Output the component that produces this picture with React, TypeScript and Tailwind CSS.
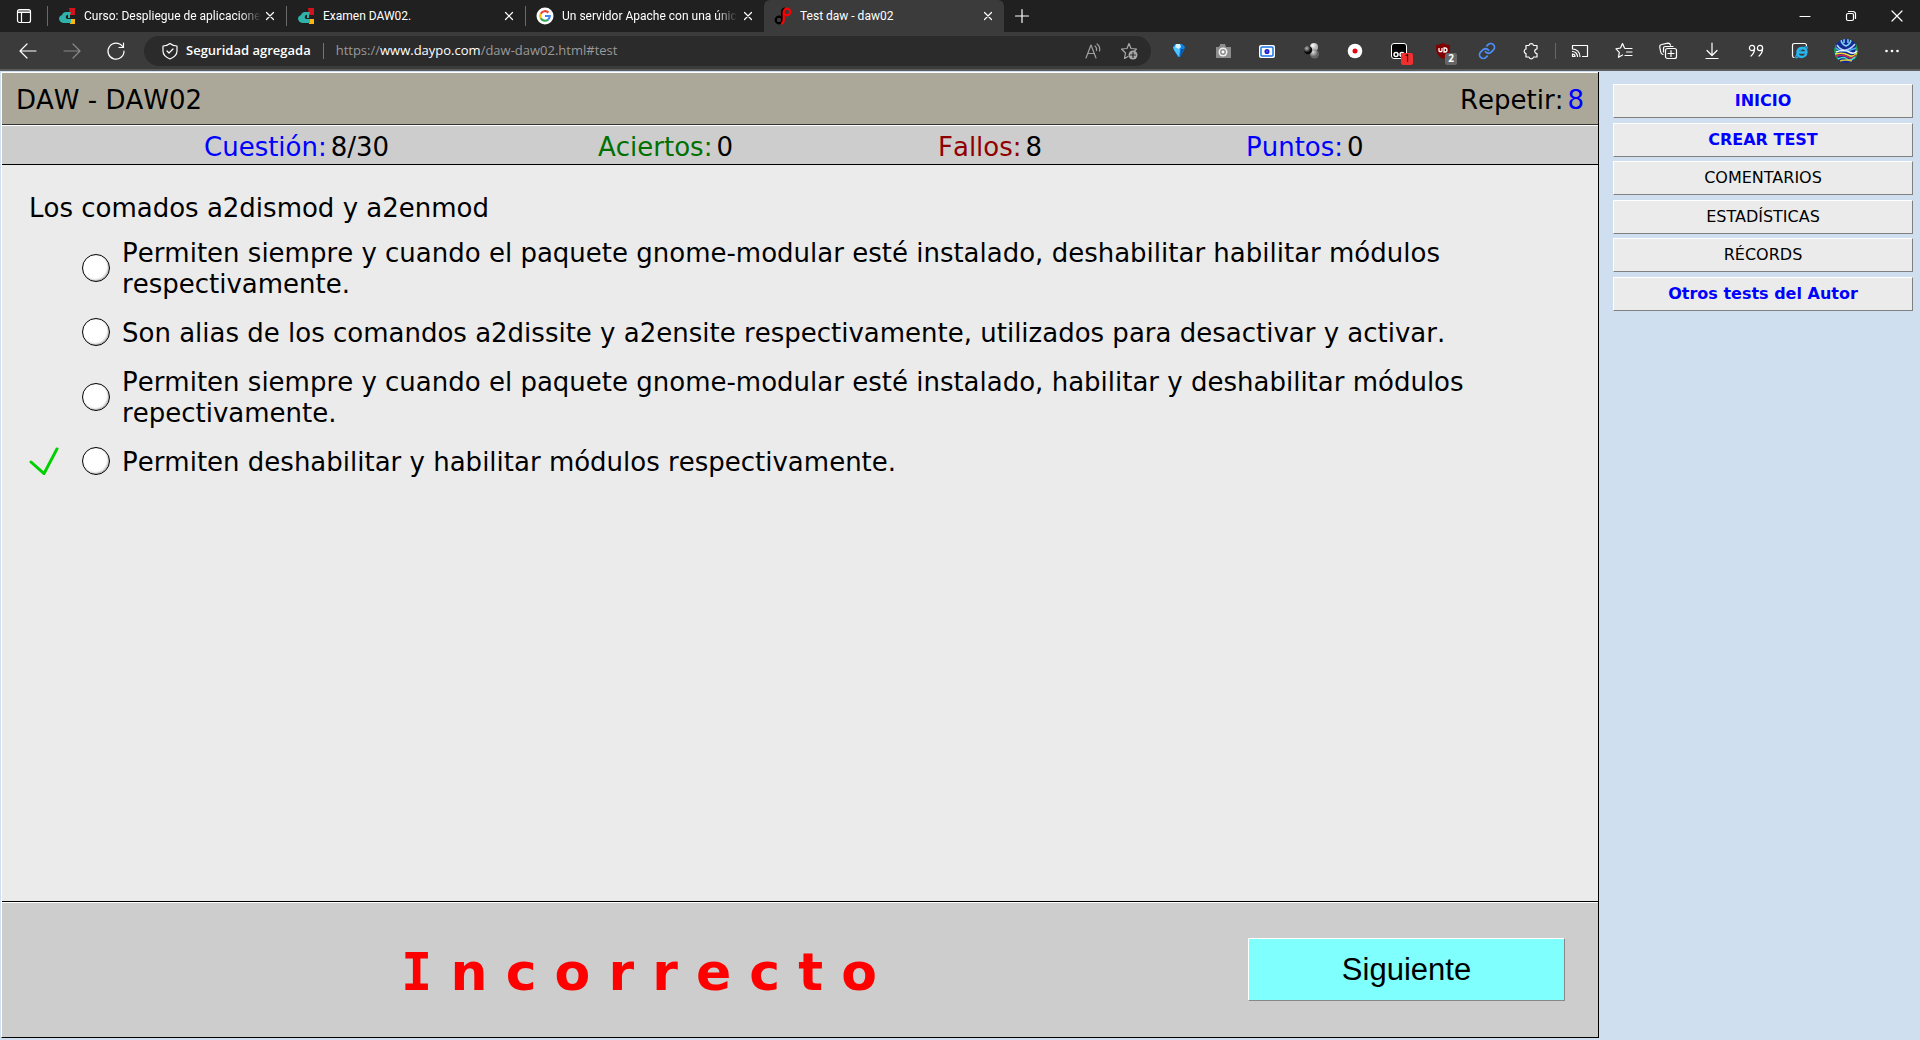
import React from "react";
import { Link as LinkIcon } from "lucide-react";

type Kids = { children: React.ReactNode };

function Ico({ children, w = 20, h = 20, c = "#ffffff" }: Kids & { w?: number; h?: number; c?: string }) {
  return (
    <svg width={w} height={h} viewBox={`0 0 ${w} ${h}`} fill="none" stroke={c} strokeWidth="1.2" strokeLinecap="round" strokeLinejoin="round" aria-hidden="true">
      {children}
    </svg>
  );
}

function CourseIcon() {
  return (
    <svg width="18" height="18" viewBox="0 0 18 18" className="shrink-0" aria-hidden="true">
      <path d="M11 1h6v7h-5z" fill="#d3131c" />
      <path d="M12 12h5v5h-5z" fill="#fbb615" />
      <path d="M13 5H8Q5 5 4 8 1 9 1 12q1 4 5 4h7v-4H9q-2-1-1-3 1-2 4-1z" fill="#2fb3ab" />
      <path d="M10 7h2v4h-2z" fill="#2fb3ab" />
      <path d="M12 11h5v1h-5z" fill="#1f1f1f" />
    </svg>
  );
}

function GoogleIcon() {
  return (
    <svg width="18" height="18" viewBox="0 0 18 18" className="shrink-0" fill="none" strokeWidth="2.2" aria-hidden="true">
      <circle cx="9" cy="9" r="8.5" fill="#fff" />
      <path d="M12.4 5.6A4.8 4.8 0 0 0 4.8 6.7" stroke="#ea4335" />
      <path d="M4.8 6.7a4.8 4.8 0 0 0 0 4.6" stroke="#fbbc05" />
      <path d="M4.8 11.3a4.8 4.8 0 0 0 7.3 1.3" stroke="#34a853" />
      <path d="M9 9h4.8q0 2.2-1.7 3.6" stroke="#4285f4" />
    </svg>
  );
}

function DaypoIcon() {
  return (
    <svg width="18" height="18" viewBox="0 0 18 18" className="shrink-0" fill="none" strokeWidth="2.2" aria-hidden="true">
      <circle cx="5" cy="13" r="3.3" stroke="#000" />
      <path d="M8.3 13V4.5Q8.3 2 11 1.2" stroke="#000" />
      <circle cx="13" cy="5" r="3.3" stroke="#f00" />
      <path d="M9.7 5v8q0 3-2.5 3.8" stroke="#f00" />
    </svg>
  );
}

function CloseButton({ label }: { label: string }) {
  return (
    <button type="button" aria-label={label} className="flex size-4 shrink-0 items-center justify-center">
      <Ico w={10} h={10}>
        <path d="M1.5 1.5l7 7M8.5 1.5l-7 7" />
      </Ico>
    </button>
  );
}

const tabs = [
  { title: "Curso: Despliegue de aplicacione", icon: <CourseIcon />, active: false, clipped: true },
  { title: "Examen DAW02.", icon: <CourseIcon />, active: false, clipped: false },
  { title: "Un servidor Apache con una únic", icon: <GoogleIcon />, active: false, clipped: true },
  { title: "Test daw - daw02", icon: <DaypoIcon />, active: true, clipped: false },
];

function TabStrip() {
  return (
    <div className="flex h-8 items-center bg-[#202020] text-white">
      <button type="button" aria-label="Menú de pestañas" className="flex w-[47px] shrink-0 items-center justify-center">
        <Ico w={16} h={16}>
          <rect x="1.5" y="1.5" width="13" height="13" rx="2" />
          <path d="M2 4.5h12M5.5 4.5v10M2 3h12" />
        </Ico>
      </button>
      {tabs.map((t) => (
        <div
          key={t.title}
          className={
            t.active
              ? "flex h-8 w-60 items-center rounded-t-md bg-[#3b3b3b] pr-2 pl-2.5"
              : "flex h-8 w-[239px] items-center pr-2"
          }
        >
          {!t.active && <span className="mr-2.5 h-5 w-px shrink-0 bg-[#6a6a6a]" />}
          {t.icon}
          <span
            className={
              t.clipped
                ? "ml-2 flex-none font-[Roboto,sans-serif] text-xs whitespace-nowrap [mask-image:linear-gradient(to_right,black_88%,transparent)]"
                : "ml-2 flex-none font-[Roboto,sans-serif] text-xs whitespace-nowrap"
            }
          >
            {t.title}
          </span>
          <span className="ml-auto flex">
            <CloseButton label={`Cerrar ${t.title}`} />
          </span>
        </div>
      ))}
      <button type="button" aria-label="Nueva pestaña" className="ml-2 flex size-5 items-center justify-center">
        <Ico w={16} h={16}>
          <path d="M8 1.5v13M1.5 8h13" />
        </Ico>
      </button>
      <div className="ml-auto flex">
        <button type="button" aria-label="Minimizar" className="flex w-[46px] justify-center">
          <Ico w={12} h={12}><path d="M1 6.5h10" /></Ico>
        </button>
        <button type="button" aria-label="Restaurar" className="flex w-[46px] justify-center">
          <Ico w={12} h={12}>
            <rect x="1.5" y="3.5" width="7" height="7" rx="1.5" />
            <path d="M3.5 1.5h4.5a2.5 2.5 0 0 1 2.5 2.5v4.5" />
          </Ico>
        </button>
        <button type="button" aria-label="Cerrar ventana" className="flex w-[46px] justify-center">
          <Ico w={12} h={12}><path d="M1 1l10 10M11 1L1 11" /></Ico>
        </button>
      </div>
    </div>
  );
}

const extensions = [
  {
    label: "Diamante",
    icon: (
      <svg width="20" height="20" viewBox="0 0 20 20">
        <path d="M6 3h7l3 3-1 3-4 7h-2L5 9 4 6z" fill="#0b86e8" />
        <path d="M4 6l5-1 2 4-1 7-5-7z" fill="#53c3ff" />
        <path d="M7 3h4l1 3-2 2-4-2z" fill="#d6f3ff" />
        <path d="M12 8l3 0-4 8z" fill="#0450a8" />
      </svg>
    ),
  },
  {
    label: "Captura",
    icon: (
      <svg width="20" height="20" viewBox="0 0 20 20">
        <path d="M3 6h3V5h1V3h5l1 3h5v11H3z" fill="#8d8d8d" />
        <circle cx="10" cy="11" r="4.5" fill="#f0f0f0" />
        <circle cx="10" cy="11" r="2.2" fill="#fff" stroke="#8d8d8d" strokeWidth="1.5" />
      </svg>
    ),
  },
  {
    label: "Visor",
    icon: (
      <svg width="20" height="20" viewBox="0 0 20 20">
        <rect x="2" y="4" width="16" height="13" rx="2" fill="#fff" />
        <rect x="4" y="6" width="12" height="9" rx="1" fill="#fff" stroke="#1a73e8" strokeWidth="1.5" />
        <circle cx="10" cy="10.5" r="1.8" fill="#5555dd" stroke="#2222cc" strokeWidth="1.5" />
      </svg>
    ),
  },
  {
    label: "Esferas",
    icon: (
      <svg width="20" height="20" viewBox="0 0 20 20">
        <defs>
          <radialGradient id="ball-light" cx="35%" cy="30%"><stop offset="0" stopColor="#fff" /><stop offset="1" stopColor="#b5b5b5" /></radialGradient>
          <radialGradient id="ball-mid" cx="35%" cy="30%"><stop offset="0" stopColor="#ddd" /><stop offset="1" stopColor="#666" /></radialGradient>
          <radialGradient id="ball-dark" cx="35%" cy="30%"><stop offset="0" stopColor="#bbb" /><stop offset="1" stopColor="#0a0a0a" /></radialGradient>
        </defs>
        <circle cx="13" cy="6" r="4" fill="url(#ball-light)" />
        <circle cx="13.5" cy="13" r="4.5" fill="url(#ball-mid)" />
        <circle cx="7" cy="9" r="4.2" fill="url(#ball-dark)" />
      </svg>
    ),
  },
  {
    label: "Grabar",
    icon: (
      <svg width="20" height="20" viewBox="0 0 20 20">
        <circle cx="10" cy="10" r="7.3" fill="#fff" />
        <circle cx="10" cy="10" r="2.5" fill="#e30613" />
      </svg>
    ),
  },
  {
    label: "Tampermonkey",
    badge: "1",
    icon: (
      <svg width="20" height="20" viewBox="0 0 20 20" fill="none" stroke="#fff">
        <rect x="2.5" y="2.5" width="15" height="15" rx="2.5" fill="#000" />
        <circle cx="7" cy="13.5" r="2" strokeWidth="1.5" />
        <circle cx="13" cy="13.5" r="2" strokeWidth="1.5" />
      </svg>
    ),
  },
  {
    label: "uBlock",
    badge: "2",
    icon: (
      <svg width="20" height="20" viewBox="0 0 20 20" fill="none">
        <path d="M10 2q3 2 7 2 1 10-7 14Q2 14 3 4q4 0 7-2z" fill="#800000" />
        <path d="M6 7v3a2 2 0 0 0 3 0V7M11 7v4h1a2 2 0 0 0 0-4z" stroke="#fff" strokeWidth="1.3" />
      </svg>
    ),
  },
  { label: "Enlace", icon: <LinkIcon size={18} color="#4c8df6" strokeWidth={2.4} /> },
  {
    label: "Extensiones",
    icon: (
      <Ico>
        <path d="M5 4.5h3a2.3 2.3 0 0 1 4.5 0H16V8a2 2 0 0 0 0 4.5V16h-3.5a2.3 2.3 0 0 1-4.5 0H5v-3.5a2.3 2.3 0 0 1 0-4.5z" />
      </Ico>
    ),
  },
];

const browserTools = [
  {
    label: "Transmitir",
    icon: (
      <Ico>
        <path d="M2.5 8V4.5h15v11h-5M2.5 8a7.5 7.5 0 0 1 7.5 7.5M2.5 10.5a5 5 0 0 1 5 5M2.5 13a2.5 2.5 0 0 1 2.5 2.5H2.5z" />
      </Ico>
    ),
  },
  {
    label: "Favoritos",
    icon: (
      <Ico>
        <path d="M10.5 7L8.5 2.5 6.5 7 2 7.8l3.3 3.5-.8 5L8.5 14M11 7.5h7M12.5 11h5.5M11 14.5h7" />
      </Ico>
    ),
  },
  {
    label: "Colecciones",
    icon: (
      <Ico>
        <rect x="7.5" y="7.5" width="11" height="10" rx="2" />
        <path d="M13 9.5v6M10 12.5h6M5 13.5q-2-.5-2.3-2.5L1.7 6q-.2-2 1.8-2.5L10 2.2q2 0 2.5 2M5.5 11V7.5q0-2 2-2H15" />
      </Ico>
    ),
  },
  { label: "Descargas", icon: <Ico><path d="M10 2v12M5 9.5l5 5 5-5M4 17.5h12" /></Ico> },
  {
    label: "Citas",
    icon: (
      <Ico>
        <circle cx="6" cy="7" r="2.6" />
        <circle cx="14" cy="7" r="2.6" />
        <path d="M8.6 7q0 5-3.6 8M16.6 7q0 5-3.6 8" />
      </Ico>
    ),
  },
  {
    label: "Modo Internet Explorer",
    icon: (
      <Ico>
        <path d="M4 16.5q-1.5 0-1.5-2v-10q0-2 2-2h10q2 0 2 2" />
        <path d="M16 13.5q-1.5 2.5-4 2.5-4.5 0-4.5-4.5T12 7t4.5 4.5H8" stroke="#28b6f0" strokeWidth="2.4" />
        <path d="M8 16q-3 2-2-1 3-6 9-9 3-1 2 1.5" stroke="#28b6f0" />
      </Ico>
    ),
  },
];

function Avatar() {
  return (
    <svg width="24" height="24" viewBox="0 0 24 24" fill="none" aria-hidden="true">
      <defs>
        <clipPath id="avatar-clip"><circle cx="12" cy="12" r="12" /></clipPath>
      </defs>
      <g clipPath="url(#avatar-clip)" strokeWidth="1.5">
        <path d="M0 0h24v24H0z" fill="#142a90" />
        <path d="M0 3l3 18M24 3l-3 18" stroke="#1f9a50" strokeWidth="3" />
        <path d="M7 0q0 5 5 7 5-2 5-7M10 0v4M14 0v4" stroke="#7fd4f5" />
        <path d="M3 6q4 6 9 5t9-6" stroke="#b8d8ff" />
        <path d="M2 9q6 6 20 0" stroke="#49a8ee" />
        <path d="M2 13q8-3 13 0t8-1" stroke="#e8f4ff" />
        <path d="M1 15q8-2 13 1t9-2" stroke="#e9d83a" />
        <path d="M2 17q8-2 12 1t8-2" stroke="#d0264e" />
        <path d="M4 20q6-3 9 0t8-2" stroke="#45e0d0" />
        <path d="M6 22q5-2 12 0" stroke="#e0c93a" />
      </g>
    </svg>
  );
}

function AddressRow() {
  return (
    <div className="flex h-[39px] items-center border-b-2 border-[#5b5b5b] bg-[#3b3b3b] text-white">
      <div className="flex items-center gap-6 pr-[18px] pl-[18px]">
        <button type="button" aria-label="Atrás"><Ico><path d="M18 10H2.5M9 3L2 10l7 7" /></Ico></button>
        <button type="button" aria-label="Adelante"><Ico c="#8a8a8a"><path d="M2 10h15.5M11 3l7 7-7 7" /></Ico></button>
        <button type="button" aria-label="Actualizar"><Ico><path d="M16.5 5.5A8 8 0 1 0 18 10M17.5 2v4.5H13" /></Ico></button>
      </div>
      <div className="flex h-[30px] flex-1 items-center rounded-full bg-[#2b2b2b] pr-3 pl-4">
        <Ico>
          <path d="M10 2.5q3 2.5 7 2.5v5q0 5-7 8-7-3-7-8V5q4 0 7-2.5zM7 10l2 2 4-4" />
        </Ico>
        <span className="ml-1.5 text-[13px] font-semibold whitespace-nowrap">Seguridad agregada</span>
        <span className="mx-3 h-4 w-px bg-[#757575]" />
        <div className="relative flex-1 text-[13px]">
          <span aria-hidden="true" className="text-[#9a9a9a]">
            https://<span className="text-white">www.daypo.com</span>/daw-daw02.html#test
          </span>
          <input aria-label="Dirección" className="absolute inset-0 w-full bg-transparent text-transparent outline-none" />
        </div>
        <button type="button" aria-label="Leer en voz alta">
          <Ico c="#a0a0a0"><path d="M3 17L8 4l5 13M5 12.5h6M12 5q2 1.5 1.5 4.5M14 3q3.5 2.5 2.5 7" /></Ico>
        </button>
        <button type="button" aria-label="Agregar a favoritos" className="ml-4">
          <Ico c="#a8a8a8">
            <path d="M10 2.5l2 5 5.5.5-2 2M10 2.5l-2 5-5.5.5 4 4-1 5.5L9 15.5" />
            <circle cx="14" cy="14" r="4.5" fill="#a8a8a8" stroke="none" />
            <path d="M14 11.5v5M11.500 14h5" stroke="#2b2b2b" />
          </Ico>
        </button>
      </div>
      <div className="flex items-center gap-6 pr-[14px] pl-[18px]">
        {extensions.map((e) => (
          <button key={e.label} type="button" aria-label={e.label} className="relative flex size-5 items-center justify-center">
            {e.icon}
            {e.badge && (
              <span
                className={
                  e.badge === "1"
                    ? "absolute top-3 left-3 flex h-3 w-3 items-center justify-center rounded-xs bg-[#f03030] text-[10px] text-black"
                    : "absolute top-3 left-3 flex h-3 w-3 items-center justify-center rounded-xs bg-[#666] text-[10px] font-bold"
                }
              >
                {e.badge}
              </span>
            )}
          </button>
        ))}
      </div>
      <span className="h-4 w-px bg-[#666]" />
      <div className="flex items-center gap-6 pr-6 pl-3.5">
        {browserTools.map((b) => (
          <button key={b.label} type="button" aria-label={b.label}>{b.icon}</button>
        ))}
      </div>
      <button type="button" aria-label="Perfil"><Avatar /></button>
      <button type="button" aria-label="Más opciones" className="mr-[18px] ml-6">
        <svg width="20" height="20" viewBox="0 0 20 20" fill="#fff">
          <circle cx="4.5" cy="10" r="1.3" /><circle cx="10" cy="10" r="1.3" /><circle cx="15.5" cy="10" r="1.3" />
        </svg>
      </button>
    </div>
  );
}

const scores = [
  { label: "Cuestión:", value: "8/30", color: "text-[#0000ff]", width: "w-[394px]" },
  { label: "Aciertos:", value: "0", color: "text-[#007000]", width: "w-[340px]" },
  { label: "Fallos:", value: "8", color: "text-[#900000]", width: "w-[308px]" },
  { label: "Puntos:", value: "0", color: "text-[#0000ff]", width: "w-40" },
];

const answers = [
  { text: "Permiten siempre y cuando el paquete gnome-modular esté instalado, deshabilitar habilitar módulos respectivamente.", ok: false },
  { text: "Son alias de los comandos a2dissite y a2ensite respectivamente, utilizados para desactivar y activar.", ok: false },
  { text: "Permiten siempre y cuando el paquete gnome-modular esté instalado, habilitar y deshabilitar módulos repectivamente.", ok: false },
  { text: "Permiten deshabilitar y habilitar módulos respectivamente.", ok: true },
];

const menu = [
  { text: "INICIO", strong: true },
  { text: "CREAR TEST", strong: true },
  { text: "COMENTARIOS", strong: false },
  { text: "ESTADÍSTICAS", strong: false },
  { text: "RÉCORDS", strong: false },
  { text: "Otros tests del Autor", strong: true },
];

function Quiz() {
  return (
    <main className="ml-px flex min-w-0 flex-1 flex-col border-r border-b border-l border-r-black border-b-black border-l-white bg-[#ebebeb] text-[26px] leading-[31px] text-black [font-kerning:none]">
      <header className="flex h-[53px] items-center justify-between border-t border-b border-t-white border-b-[#333] bg-[#aca899] pt-1 pr-3.5 pl-3.5">
        <h1>DAW - DAW02</h1>
        <p>Repetir:<span className="ml-1 text-[#0000ff]">8</span></p>
      </header>
      <div className="flex h-10 items-center border-t border-b border-t-white border-b-black bg-[#cdcdcd] pt-1 pl-[202px] whitespace-nowrap">
        {scores.map((s) => (
          <p key={s.label} className={s.width}>
            <span className={s.color}>{s.label}</span>
            <span className="ml-1">{s.value}</span>
          </p>
        ))}
      </div>
      <section className="flex-1 px-[27px] pt-7">
        <p id="question">Los comados a2dismod y a2enmod</p>
        <div role="radiogroup" aria-labelledby="question" className="mt-3.5 flex flex-col gap-[18px]">
          {answers.map((a, i) => (
            <div key={a.text} className="flex items-center">
              <span className="w-[53px] shrink-0">
                {a.ok && (
                  <svg width="30" height="28" viewBox="0 0 30 30" preserveAspectRatio="none" fill="none" stroke="#00d000" strokeWidth="3" strokeLinecap="round" role="img" aria-label="Respuesta correcta" className="mb-[3px] block">
                    <path d="M2 16l13 12.5L28 2" />
                  </svg>
                )}
              </span>
              <input
                id={`r${i}`}
                type="radio"
                name="respuesta"
                className="mb-[3px] size-7 shrink-0 appearance-none rounded-full border border-black bg-white shadow-[inset_-1px_-1px_2px_#aaa]"
              />
              <label htmlFor={`r${i}`} className="ml-3 max-w-[1390px]">{a.text}</label>
            </div>
          ))}
        </div>
      </section>
      <footer className="flex h-[136px] items-center border-t border-black bg-[#cdcdcd] shadow-[inset_0_1px_0_white]">
        <p className="flex-1 pt-1 pl-7 text-center text-[52px] leading-none font-bold text-[#ff0000]">
          <span className="font-['DejaVu_Sans_Mono',monospace]">I</span> n c o r r e c t o
        </p>
        <button type="button" className="mr-[33px] h-[63px] w-[317px] border border-t-white border-r-[#888] border-b-[#888] border-l-white bg-[#80ffff] font-['Liberation_Sans',sans-serif] text-[31px]">
          Siguiente
        </button>
      </footer>
    </main>
  );
}

export default function App() {
  return (
    <div className="flex h-screen min-h-[600px] flex-col overflow-hidden bg-[#cfdfef] font-['DejaVu_Sans',sans-serif]">
      <div className="font-['Open_Sans','Noto_Sans',sans-serif]">
        <TabStrip />
        <AddressRow />
      </div>
      <div className="flex min-h-0 flex-1 pt-px pb-0.5">
        <Quiz />
        <nav className="flex h-[239px] w-[321px] shrink-0 flex-col justify-between pt-3 pr-[7px] pl-3.5">
          {menu.map((m) => (
            <a
              key={m.text}
              href="#test"
              className={
                m.strong
                  ? "border border-t-white border-r-[#808080] border-b-[#808080] border-l-white bg-[#ebebeb] py-[5px] text-center text-base leading-[22px] font-bold text-[#0000ff]"
                  : "border border-t-white border-r-[#808080] border-b-[#808080] border-l-white bg-[#ebebeb] py-[5px] text-center text-base leading-[22px] text-black"
              }
            >
              {m.text}
            </a>
          ))}
        </nav>
      </div>
    </div>
  );
}
